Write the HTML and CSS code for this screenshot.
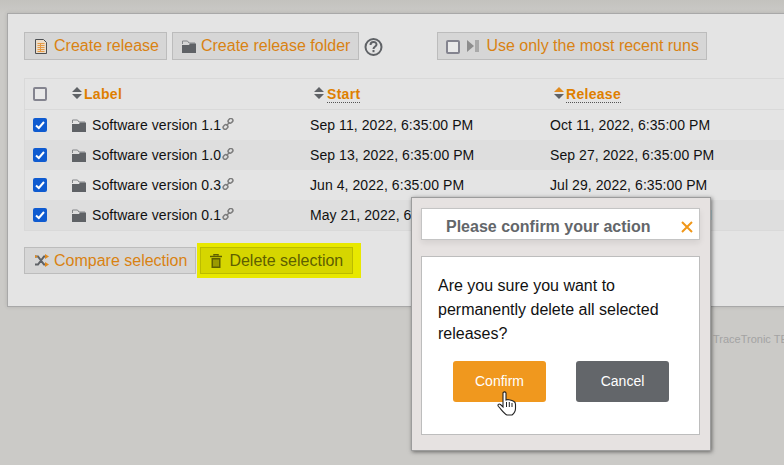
FILE: index.html
```html
<!DOCTYPE html>
<html lang="en">
<head>
    <meta charset="UTF-8">
    <title>Releases</title>
    <link rel="stylesheet" href="styles.css">
</head>
<body>
    <svg class="defs">
        <symbol id="folder" viewBox="0 0 14 13">
            <path d="M.5 4V1h5L7 3h6" fill="none" stroke="#84878a"/>
            <path d="M0 5h7l1-1.500h6V13H0z" fill="#5f6266"/>
        </symbol>
        <symbol id="link" viewBox="0 0 12 12">
            <g fill="none" stroke="#7c7c7c" stroke-width="1.500">
                <rect x="6" y="0.800" width="5" height="4" rx="2" transform="rotate(-45 8.500 2.800)"/>
                <rect x="1" y="7" width="5" height="4" rx="2" transform="rotate(-45 3.500 9)"/>
                <path d="M4.500 7.500l3-3"/>
            </g>
        </symbol>
        <symbol id="sort" viewBox="0 0 10 12">
            <path d="M5 0l5 5H0z M0 7h10l-5 5z" fill="#5f6266"/>
        </symbol>
    </svg>

    <div class="panel">
        <div class="toolbar">
            <button class="btn">
                <svg class="btn-icon" width="12" height="15" viewBox="0 0 12 15">
                    <path d="M.5.500h8l3 3v11H.500z" fill="#ecdcc8" stroke="#4c4f52"/>
                    <path d="M2.500 4.500h7M2.500 6.500h7M2.500 8.500h7M2.500 10.500h7M2.500 12.500h7M5.500 4v9" stroke="#e59a45"/>
                </svg>
                Create release
            </button>
            <button class="btn btn-folder">
                <svg class="btn-icon" width="14" height="13"><use href="#folder"/></svg>
                Create release folder
            </button>
            <svg class="help" width="20" height="20" viewBox="0.500 0 20 20">
                <circle cx="10" cy="10" r="8" fill="none" stroke="#5f6266" stroke-width="2"/>
                <path d="M7 8c0-4 6-4 6-.500 0 2-3 2-3 4.500" fill="none" stroke="#5f6266" stroke-width="2"/>
                <rect x="9" y="13" width="2" height="2.200" fill="#5f6266"/>
            </svg>
            <button class="btn btn-recent">
                <span class="checkbox"></span>
                <svg class="btn-icon" width="12" height="12" viewBox="0 0 12 12">
                    <path d="M0 0l7 6-7 6z" fill="#8d8d8d"/>
                    <rect x="8" y="0" width="4" height="12" fill="#a9a9a9"/>
                </svg>
                Use only the most recent runs
            </button>
        </div>

        <div class="table">
            <div class="row row-head">
                <div class="cell"><span class="checkbox"></span></div>
                <div class="cell"><svg class="sort" width="10" height="12"><use href="#sort"/></svg><span class="col-title">Label</span></div>
                <div class="cell cell-pad"><svg class="sort sort-wide" width="10" height="12"><use href="#sort"/></svg><span class="col-title col-active">Start</span></div>
                <div class="cell cell-pad">
                    <svg class="sort" width="10" height="12" viewBox="0 0 10 12"><path d="M5 0l5 5H0z" fill="#e08a1e"/><path d="M0 7h10l-5 5z" fill="#5f6266"/></svg>
                    <span class="col-title col-active">Release</span>
                </div>
            </div>
            <div class="row">
                <div class="cell"><span class="checkbox checked"><svg width="14" height="14" viewBox="0 0 14 14"><path d="M3 7.500l2.800 2.500L11 4" fill="none" stroke="#fff" stroke-width="2"/></svg></span></div>
                <div class="cell"><svg class="folder" width="14" height="13"><use href="#folder"/></svg>Software version 1.1<svg class="link" width="12" height="12"><use href="#link"/></svg></div>
                <div class="cell">Sep 11, 2022, 6:35:00 PM</div>
                <div class="cell">Oct 11, 2022, 6:35:00 PM</div>
            </div>
            <div class="row row-alt">
                <div class="cell"><span class="checkbox checked"><svg width="14" height="14" viewBox="0 0 14 14"><path d="M3 7.500l2.800 2.500L11 4" fill="none" stroke="#fff" stroke-width="2"/></svg></span></div>
                <div class="cell"><svg class="folder" width="14" height="13"><use href="#folder"/></svg>Software version 1.0<svg class="link" width="12" height="12"><use href="#link"/></svg></div>
                <div class="cell">Sep 13, 2022, 6:35:00 PM</div>
                <div class="cell">Sep 27, 2022, 6:35:00 PM</div>
            </div>
            <div class="row">
                <div class="cell"><span class="checkbox checked"><svg width="14" height="14" viewBox="0 0 14 14"><path d="M3 7.500l2.800 2.500L11 4" fill="none" stroke="#fff" stroke-width="2"/></svg></span></div>
                <div class="cell"><svg class="folder" width="14" height="13"><use href="#folder"/></svg>Software version 0.3<svg class="link" width="12" height="12"><use href="#link"/></svg></div>
                <div class="cell">Jun 4, 2022, 6:35:00 PM</div>
                <div class="cell">Jul 29, 2022, 6:35:00 PM</div>
            </div>
            <div class="row row-alt">
                <div class="cell"><span class="checkbox checked"><svg width="14" height="14" viewBox="0 0 14 14"><path d="M3 7.500l2.800 2.500L11 4" fill="none" stroke="#fff" stroke-width="2"/></svg></span></div>
                <div class="cell"><svg class="folder" width="14" height="13"><use href="#folder"/></svg>Software version 0.1<svg class="link" width="12" height="12"><use href="#link"/></svg></div>
                <div class="cell">May 21, 2022, 6:35:00 PM</div>
                <div class="cell">Jun 21, 2022, 6:35:00 PM</div>
            </div>
        </div>

        <div class="actions">
            <button class="btn btn-low">
                <svg class="btn-icon" width="15" height="13" viewBox="0 0 15 13">
                    <path d="M1 2.500h3l6 8h2M1 10.500h3l6-8h2" fill="none" stroke="#5f6266" stroke-width="2"/>
                    <path d="M11 0l4 2.500L11 5zM11 8l4 2.500L11 13zM1 1l3 1.500L1 4z" fill="#e08a1e"/>
                </svg>
                Compare selection
            </button>
            <div class="highlight">
                <button class="btn btn-low btn-marked">
                    <svg class="btn-icon" width="12" height="14" viewBox="0 0 12 14">
                        <path d="M4 1.500V.500h4v1M0 2.500h12" fill="none" stroke="#5e5f00" stroke-width="1.500"/>
                        <path d="M1.500 4h9v10h-9z" fill="#5e5f00"/>
                        <path d="M4 5.500v7M6 5.500v7M8 5.500v7" stroke="#d5d500"/>
                    </svg>
                    Delete selection
                </button>
            </div>
        </div>
    </div>

    <div class="footer-note">TraceTronic TEST-GUIDE</div>

    <div class="dialog">
        <div class="dialog-head">
            <span class="dialog-title">Please confirm your action</span>
            <svg class="dialog-close" width="12" height="12" viewBox="0 0 12 12">
                <path d="M1 1l10 10M11 1L1 11" stroke="#f09719" stroke-width="2"/>
            </svg>
        </div>
        <div class="dialog-body">
            <p>Are you sure you want to permanently delete all selected releases?</p>
            <div class="dialog-buttons">
                <button class="dlg-btn dlg-confirm">Confirm</button>
                <button class="dlg-btn dlg-cancel">Cancel</button>
            </div>
        </div>
    </div>

    <svg class="cursor" width="20" height="25" viewBox="0 0 20 25">
        <path d="M6 2c0-1.500 3-1.500 3 0v7l2-.5 2 .5 2 .5 2 1c1 .5 1.500 1.500 1.500 3v4c0 3-1.500 5-3.500 6.500H10C7.500 23 5.500 20 1.500 15.500c-1.500-2 .5-3 2-2L6 16z" fill="#fff" stroke="#222" stroke-width="1.100"/>
        <path d="M9.500 11v5M12.300 11v5M15 12v4" stroke="#222"/>
    </svg>
</body>
</html>
```

FILE: styles.css
```css
* {
    margin: 0;
    padding: 0;
    box-sizing: border-box;
}

html, body {
    height: 100%;
    overflow: hidden;
}

body {
    font-family: "Liberation Sans", Arial, sans-serif;
    font-size: 14px;
    color: #111;
    background: linear-gradient(#c3c2be 0, #cbcac7 14px);
    padding: 13px 0 0 7px;
    position: relative;
}

.defs {
    position: absolute;
    width: 0;
    height: 0;
}

.panel {
    width: 900px;
    height: 294px;
    background: #e4e4e4;
    border: 1px solid #a8a8a8;
    border-right: none;
    padding: 18px 0 0 16px;
    box-shadow: 0 0 4px rgba(0, 0, 0, 0.12);
}

.toolbar {
    display: flex;
    align-items: center;
    height: 28px;
}

.btn {
    display: flex;
    align-items: center;
    height: 28px;
    padding: 0 7px 0 10px;
    margin-right: 5px;
    background: #d6d6d6;
    border: 1px solid #bcbcbc;
    color: #d98212;
    font-family: inherit;
    font-size: 16px;
    white-space: nowrap;
}

.btn-icon {
    margin-right: 7px;
    flex: none;
}

.btn-folder {
    padding: 0 8px 0 9px;
}

.btn-folder .btn-icon {
    margin-right: 5px;
}

.help {
    margin: 1px 0 0 0;
}

.btn-recent {
    margin-left: 53px;
    padding: 0 7px 0 8px;
}

.btn-recent .checkbox {
    margin: 2px 7px 0 0;
}

.checkbox {
    display: inline-block;
    width: 14px;
    height: 14px;
    border: 2px solid #84848f;
    border-radius: 2px;
    background: #e9e9e9;
    flex: none;
}

.checkbox.checked {
    border: none;
    background: #0f5bd0;
}

.checkbox svg {
    display: block;
}

.table {
    margin-top: 18px;
    width: 860px;
    border: 1px solid #d9d9d9;
    border-right: none;
    letter-spacing: 0.07px;
}

.row {
    display: grid;
    grid-template-columns: 47px 238px 240px 1fr;
    height: 30px;
    align-items: center;
}

.row-head {
    height: 31px;
    border-bottom: 1px solid #d9d9d9;
}

.row-alt {
    background: #dedede;
}

.cell {
    display: flex;
    align-items: center;
    white-space: nowrap;
}

.cell:first-child {
    padding-left: 8px;
}

.cell-pad {
    padding-left: 4px;
}

.sort {
    flex: none;
    margin: -2px 2px 0 0;
}

.sort-wide {
    margin-right: 3px;
}

.col-title {
    font-size: 14px;
    font-weight: bold;
    color: #df7f00;
    letter-spacing: 0.3px;
}

.col-active {
    border-bottom: 1px dotted #555;
}

.folder {
    margin-right: 6px;
    flex: none;
}

.link {
    margin: -3px 0 0 1px;
    flex: none;
}

.actions {
    display: flex;
    align-items: center;
    margin-top: 12px;
    height: 35px;
}

.btn-low {
    height: 27px;
    padding: 0 8px 0 9px;
    margin: 0;
}

.btn-low .btn-icon {
    margin-right: 5px;
}

.highlight {
    margin-left: 1px;
    background: #e8e800;
    padding: 4px 8px 4px 3px;
}

.btn-marked {
    background: #d6d600;
    border-color: #bcbc00;
    color: #5e5f00;
    padding: 0 9px 0 9px;
}

.btn-marked .btn-icon {
    margin-right: 7px;
}

.footer-note {
    position: absolute;
    left: 713px;
    top: 333px;
    font-size: 11px;
    color: #a3a3a3;
    white-space: nowrap;
}

.dialog {
    position: absolute;
    left: 411px;
    top: 197px;
    width: 300px;
    height: 254px;
    background: #e6e2e1;
    border: 1px solid #9c9c9c;
    box-shadow: 1px 1px 4px rgba(0, 0, 0, 0.5);
    padding: 10px 10px 10px 9px;
}

.dialog-head {
    display: flex;
    align-items: center;
    height: 32px;
    background: #fff;
    border: 1px solid #c4c4c4;
    padding: 5px 6px 0 24px;
    box-shadow: 0 3px 6px rgba(0, 0, 0, 0.08);
}

.dialog-title {
    flex: 1;
    font-size: 16px;
    font-weight: bold;
    color: #63666a;
}

.dialog-body {
    margin-top: 16px;
    height: 179px;
    background: #fff;
    border: 1px solid #bdbdbd;
    padding: 17px 16px 0;
}

.dialog-body p {
    font-size: 16px;
    line-height: 24px;
    color: #111;
}

.dialog-buttons {
    display: flex;
    gap: 30px;
    margin: 15px 0 0 15px;
}

.dlg-btn {
    width: 93px;
    height: 41px;
    border: none;
    border-radius: 3px;
    padding-bottom: 2px;
    color: #fff;
    font-family: inherit;
    font-size: 14px;
}

.dlg-confirm {
    background: #f0981e;
}

.dlg-cancel {
    background: #63666a;
}

.cursor {
    position: absolute;
    left: 497px;
    top: 391px;
}
```
